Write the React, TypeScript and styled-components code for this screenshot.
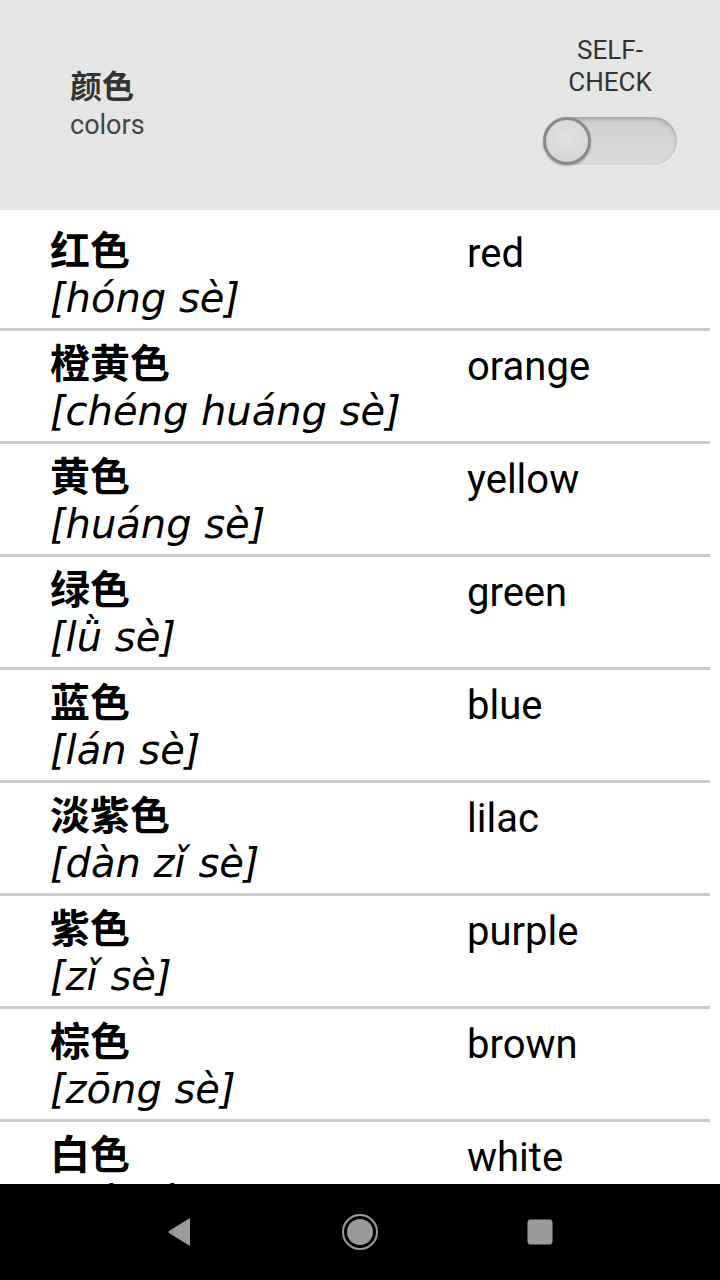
import React from "react";
import styled, { createGlobalStyle } from "styled-components";

const Global = createGlobalStyle`
  html, body { margin: 0; padding: 0; background: #ffffff; }
  * { box-sizing: border-box; }
`;

const Screen = styled.div`
  width: 720px;
  height: 1280px;
  display: flex;
  flex-direction: column;
  overflow: hidden;
  background: #ffffff;
`;

const Header = styled.header`
  height: 210px;
  flex: 0 0 210px;
  background: #e5e5e5;
  display: flex;
  align-items: flex-start;
  justify-content: space-between;
  padding: 0 43px 0 70px;
`;

const Title = styled.div`
  display: flex;
  flex-direction: column;
  padding-top: 62px;
`;

const TitleZh = styled.div`
  font-family: "Noto Sans CJK SC", sans-serif;
  font-weight: 700;
  font-size: 32px;
  line-height: 44px;
  color: #333333;
`;

const TitleEn = styled.div`
  font-family: Roboto, "Liberation Sans", sans-serif;
  font-size: 27px;
  line-height: 34px;
  margin-top: 2px;
  color: #444444;
`;

const CheckBlock = styled.div`
  display: flex;
  flex-direction: column;
  align-items: center;
  gap: 19px;
  padding-top: 34px;
`;

const CheckLabel = styled.div`
  font-family: Roboto, "Liberation Sans", sans-serif;
  font-size: 26px;
  line-height: 32px;
  color: #333333;
  text-align: center;
`;

const Track = styled.div`
  position: relative;
  width: 134px;
  height: 48px;
  border-radius: 24px;
  background: linear-gradient(#d0d0d0, #dadada);
  box-shadow: inset 0 2px 4px rgba(0, 0, 0, 0.25), 0 1px 1px rgba(255, 255, 255, 0.6);
`;

const Thumb = styled.div`
  position: absolute;
  left: 0;
  top: 0;
  width: 48px;
  height: 48px;
  border-radius: 50%;
  background: radial-gradient(circle at 50% 40%, #e2e2e2, #d2d2d2);
  border: 3px solid #8a8a8a;
  box-shadow: 0 1px 2px rgba(0, 0, 0, 0.3);
`;

const List = styled.div`
  flex: 1 1 auto;
  overflow: hidden;
  display: flex;
  flex-direction: column;
  padding-top: 8px;
`;

const Row = styled.div`
  display: flex;
  flex: 0 0 auto;
`;

const Left = styled.div`
  width: 412px;
  height: 113px;
  padding: 8px 0 0 50px;
  border-bottom: 3px solid #cccccc;
  display: flex;
  flex-direction: column;
  gap: 5px;
`;

const Right = styled.div`
  width: 298px;
  height: 113px;
  padding: 14px 0 0 55px;
  border-bottom: 3px solid #cccccc;
`;

const Hanzi = styled.div`
  font-family: "Noto Sans CJK SC", sans-serif;
  font-weight: 700;
  font-size: 40px;
  line-height: 44px;
  color: #000000;
`;

const Pinyin = styled.div`
  font-family: "DejaVu Sans", sans-serif;
  font-style: italic;
  font-size: 40px;
  line-height: 46px;
  color: #000000;
  white-space: nowrap;
`;

const English = styled.div`
  font-family: Roboto, "Liberation Sans", sans-serif;
  font-size: 40px;
  line-height: 44px;
  color: #000000;
`;

const NavBar = styled.nav`
  flex: 0 0 96px;
  height: 96px;
  background: #000000;
  display: flex;
  align-items: center;
  justify-content: center;
  position: relative;
  z-index: 1;
`;

const NavSlot = styled.div`
  width: 180px;
  display: flex;
  justify-content: center;
  align-items: center;
`;

const rows = [
  { zh: "红色", py: "[hóng sè]", en: "red" },
  { zh: "橙黄色", py: "[chéng huáng sè]", en: "orange" },
  { zh: "黄色", py: "[huáng sè]", en: "yellow" },
  { zh: "绿色", py: "[lǜ sè]", en: "green" },
  { zh: "蓝色", py: "[lán sè]", en: "blue" },
  { zh: "淡紫色", py: "[dàn zǐ sè]", en: "lilac" },
  { zh: "紫色", py: "[zǐ sè]", en: "purple" },
  { zh: "棕色", py: "[zōng sè]", en: "brown" },
  { zh: "白色", py: "[bái sè]", en: "white" },
];

export default function App() {
  return (
    <>
      <Global />
      <Screen>
        <Header>
          <Title>
            <TitleZh>颜色</TitleZh>
            <TitleEn>colors</TitleEn>
          </Title>
          <CheckBlock>
            <CheckLabel>
              SELF-
              <br />
              CHECK
            </CheckLabel>
            <Track>
              <Thumb />
            </Track>
          </CheckBlock>
        </Header>
        <List>
          {rows.map((r) => (
            <Row key={r.zh}>
              <Left>
                <Hanzi>{r.zh}</Hanzi>
                <Pinyin>{r.py}</Pinyin>
              </Left>
              <Right>
                <English>{r.en}</English>
              </Right>
            </Row>
          ))}
        </List>
        <NavBar>
          <NavSlot>
            <svg width="28" height="30" viewBox="0 0 28 30">
              <path d="M24 2 L24 28 Q24 29 23 28.5 L3 16 Q2 15 3 14 L23 1.5 Q24 1 24 2 Z" fill="#9a9a9a" />
            </svg>
          </NavSlot>
          <NavSlot>
            <svg width="40" height="40" viewBox="0 0 40 40">
              <circle cx="20" cy="20" r="17" fill="none" stroke="#9a9a9a" strokeWidth="2" />
              <circle cx="20" cy="20" r="13" fill="#9a9a9a" />
            </svg>
          </NavSlot>
          <NavSlot>
            <svg width="26" height="26" viewBox="0 0 26 26">
              <rect x="0.5" y="0.5" width="25" height="25" rx="3" fill="#9a9a9a" />
            </svg>
          </NavSlot>
        </NavBar>
      </Screen>
    </>
  );
}
